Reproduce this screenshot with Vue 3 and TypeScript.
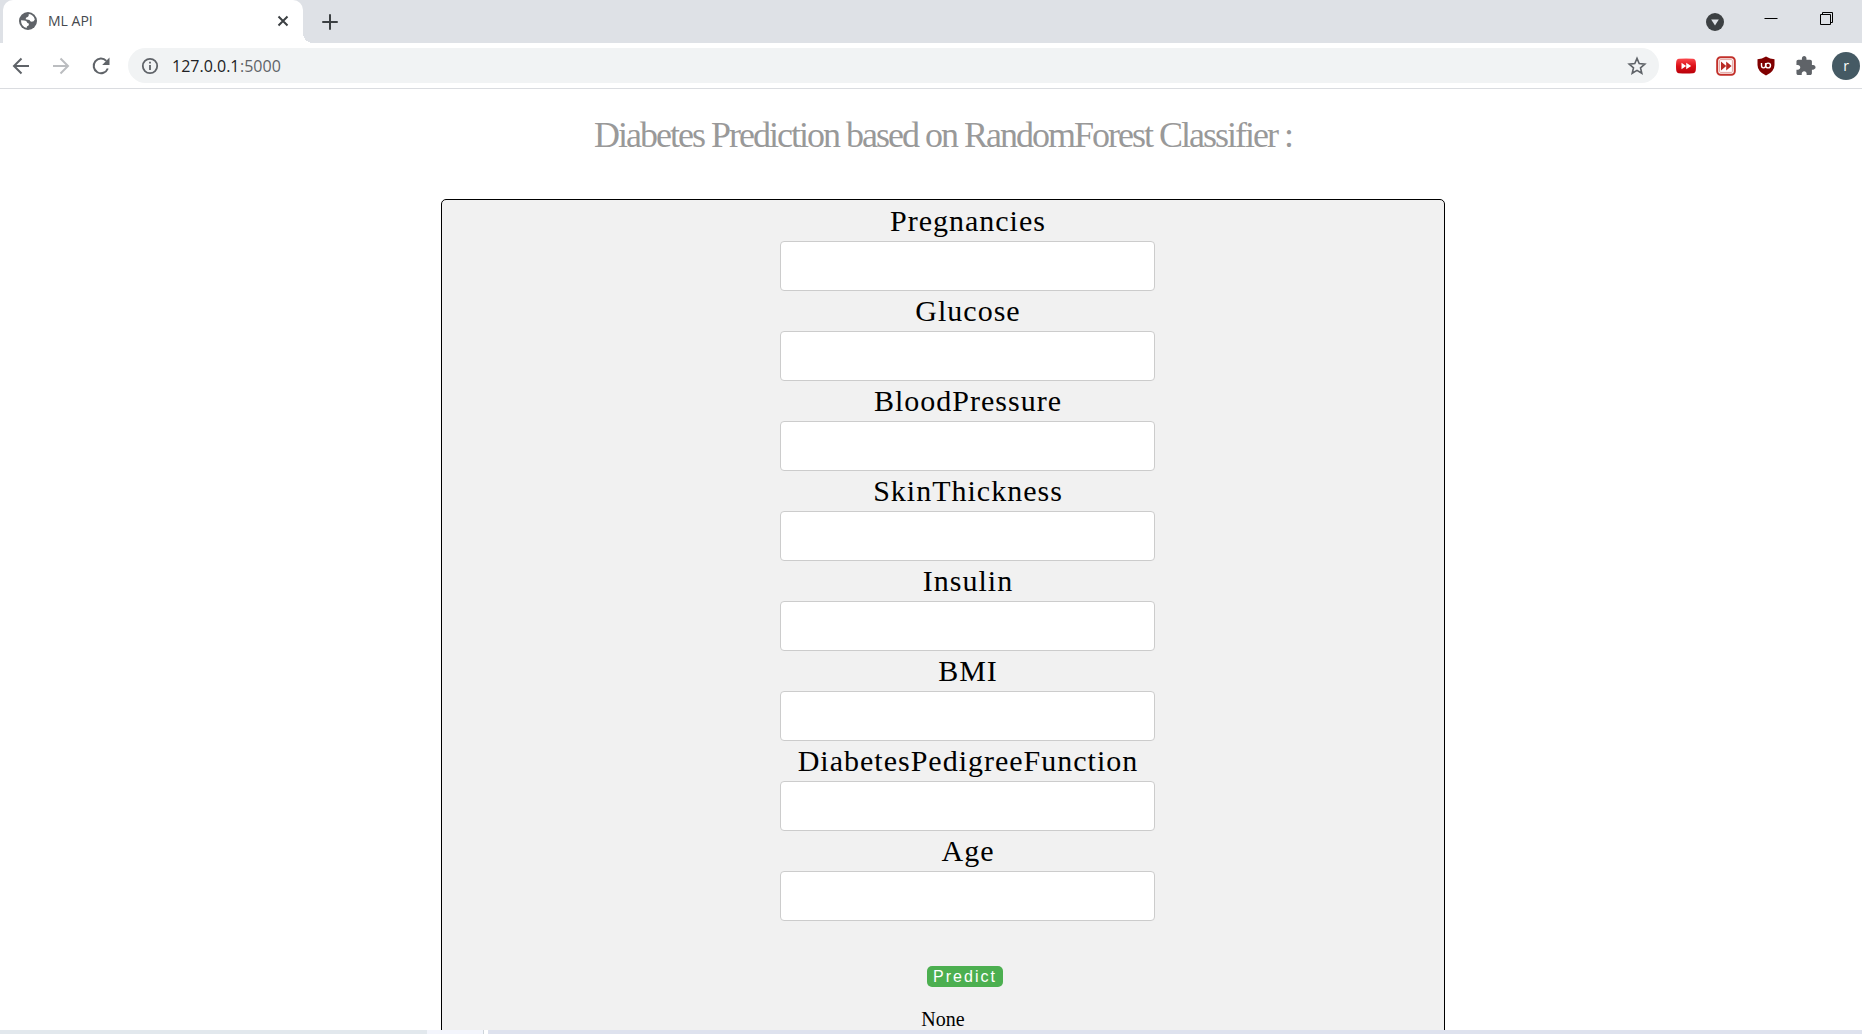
<script setup lang="ts">
import { reactive, ref } from 'vue'

interface Field {
  id: string
  label: string
}

const fields: Field[] = [
  { id: 'pregnancies', label: 'Pregnancies' },
  { id: 'glucose', label: 'Glucose' },
  { id: 'blood-pressure', label: 'BloodPressure' },
  { id: 'skin-thickness', label: 'SkinThickness' },
  { id: 'insulin', label: 'Insulin' },
  { id: 'bmi', label: 'BMI' },
  { id: 'pedigree', label: 'DiabetesPedigreeFunction' },
  { id: 'age', label: 'Age' },
]

const values = reactive<Record<string, string>>({})
const host = ref<string>('127.0.0.1')
const result = ref<string>('None')
</script>

<template>
  <div class="window">
    <header class="tabstrip">
      <div class="tab">
        <svg class="globe" viewBox="0 0 18 18" width="18" height="18">
          <circle cx="9" cy="9" r="9" fill="#5f6368" />
          <path
            d="M2 8.200 L5.200 8.600 Q7.800 8.600 8 10.300 Q8 11.400 9.800 11.500 Q10.400 13.800 8 14.300 L7.600 15.900 Q2 14.800 2 8.200 Z"
            fill="#fff"
          />
          <path
            d="M9.800 2 Q14.600 2.600 15.800 7.400 Q15 9.800 12.600 9.800 L11.300 9.200 Q10.900 7.800 9 7.800 L6.700 7.300 Q6.400 5.300 8.600 4.900 Q10 4.600 9.800 2 Z"
            fill="#fff"
          />
        </svg>
        <span class="tab-title">ML API</span>
        <button class="icon-btn" type="button" aria-label="Close tab">
          <svg viewBox="0 0 12 12" width="12" height="12">
            <path d="M1.500 1.500 L10.500 10.500 M10.500 1.500 L1.500 10.500" stroke="#3c4043" stroke-width="2" />
          </svg>
        </button>
      </div>
      <button class="icon-btn new-tab" type="button" aria-label="New tab">
        <svg viewBox="0 0 16 16" width="16" height="16">
          <path d="M8 1 V15 M1 8 H15" stroke="#3c4043" stroke-width="2" stroke-linecap="round" />
        </svg>
      </button>
      <div class="window-controls">
        <button class="icon-btn" type="button" aria-label="Search tabs">
          <svg viewBox="0 0 18 18" width="18" height="18">
            <circle cx="9" cy="9" r="9" fill="#3c4043" />
            <path d="M5.200 6.500 H12.800 L9 12.400 Z" fill="#dee1e6" />
          </svg>
        </button>
        <button class="icon-btn raised" type="button" aria-label="Minimize">
          <svg viewBox="0 0 14 14" width="14" height="14">
            <path d="M0.500 6.500 H13.500" stroke="#000" />
          </svg>
        </button>
        <button class="icon-btn raised" type="button" aria-label="Restore">
          <svg viewBox="0 0 14 14" width="14" height="14">
            <path d="M0.500 2.500 H10.500 V12.500 H0.500 Z M2.500 2.500 V0.500 H12.500 V10.500 H10.500" fill="none" stroke="#000" />
          </svg>
        </button>
      </div>
    </header>

    <nav class="toolbar">
      <div class="nav-buttons">
        <button class="icon-btn" type="button" aria-label="Back">
          <svg viewBox="0 0 18 18" width="18" height="18" fill="none" stroke="#5f6368" stroke-width="2">
            <path d="M17 9 H2 M9.500 1.500 L2 9 L9.500 16.500" />
          </svg>
        </button>
        <button class="icon-btn" type="button" aria-label="Forward">
          <svg viewBox="0 0 18 18" width="18" height="18" fill="none" stroke="#bbbdc0" stroke-width="2">
            <path d="M1 9 H16 M8.500 1.500 L16 9 L8.500 16.500" />
          </svg>
        </button>
        <button class="icon-btn" type="button" aria-label="Reload">
          <svg viewBox="0 0 18 18" width="18" height="18">
            <path d="M15.800 11.500 A7.300 7.300 0 1 1 14.300 3.900" fill="none" stroke="#5f6368" stroke-width="2" />
            <path d="M17.500 0.600 V8 H10.200 Z" fill="#5f6368" />
          </svg>
        </button>
      </div>

      <label class="omnibox">
        <svg viewBox="0 0 18 18" width="18" height="18">
          <circle cx="9" cy="9" r="7.200" fill="none" stroke="#5f6368" stroke-width="1.800" />
          <path d="M9 8 V13 M9 4.800 V6.600" stroke="#5f6368" stroke-width="1.800" />
        </svg>
        <input v-model="host" class="host" type="text" aria-label="Address" />
        <span class="port">:5000</span>
        <button class="icon-btn star" type="button" aria-label="Bookmark this page">
          <svg viewBox="0 0 20 20" width="20" height="20">
            <path
              d="M10 2.400 L12.200 7.600 L17.800 8.100 L13.500 11.800 L14.800 17.300 L10 14.400 L5.200 17.300 L6.500 11.800 L2.200 8.100 L7.800 7.600 Z"
              fill="none"
              stroke="#5f6368"
              stroke-width="1.600"
            />
          </svg>
        </button>
      </label>

      <div class="extensions">
        <button class="icon-btn" type="button" aria-label="Playback speed">
          <svg viewBox="0 0 20 20" width="20" height="20">
            <defs>
              <linearGradient id="red-fade" x1="0" y1="0" x2="0" y2="1">
                <stop offset="0" stop-color="#fb4a4f" />
                <stop offset="0.500" stop-color="#dd1017" />
                <stop offset="1" stop-color="#b8000a" />
              </linearGradient>
            </defs>
            <path
              d="M3 2.800 Q10 2 17 2.800 Q19.600 3 19.800 6 Q20.200 10 19.800 14 Q19.600 17 17 17.200 Q10 18 3 17.200 Q0.400 17 0.200 14 Q-0.200 10 0.200 6 Q0.400 3 3 2.800 Z"
              fill="url(#red-fade)"
            />
            <path d="M5.500 6.800 L10.200 10 L5.500 13.200 Z M10.200 6.800 L15.200 10 L10.200 13.200 Z" fill="#fff" />
          </svg>
        </button>
        <button class="icon-btn" type="button" aria-label="Fast forward">
          <svg viewBox="0 0 20 20" width="20" height="20">
            <rect x="1.200" y="1.200" width="17.600" height="17.600" rx="3.500" fill="#fff" stroke="#c2302a" stroke-width="2" />
            <rect x="3.600" y="3.600" width="12.800" height="12.800" rx="1" fill="none" stroke="#dc8f8a" stroke-width="0.800" />
            <path d="M5 5.500 L10.200 10 L5 14.500 Z M10.200 5.500 L15.600 10 L10.200 14.500 Z" fill="#b92a24" />
          </svg>
        </button>
        <button class="icon-btn" type="button" aria-label="Content blocker">
          <svg viewBox="0 0 20 20" width="20" height="20">
            <path d="M10 0.500 Q14 3 18.500 3.200 V9 Q18.500 15.500 10 19.600 Q1.500 15.500 1.500 9 V3.200 Q6 3 10 0.500 Z" fill="#800000" />
            <path d="M5.500 7 V9.600 Q5.500 11.900 7.500 11.900 Q9.600 11.900 9.600 9.600 V7" fill="none" stroke="#fff" stroke-width="1.400" />
            <circle cx="12.100" cy="9.500" r="2.400" fill="none" stroke="#fff" stroke-width="1.400" />
          </svg>
        </button>
        <button class="icon-btn" type="button" aria-label="Extensions">
          <svg viewBox="1.500 1 22 22" width="20" height="20">
            <path
              d="M20.500 11H19V7c0-1.100-.900-2-2-2h-4V3.500C13 2.120 11.880 1 10.500 1S8 2.120 8 3.500V5H4c-1.100 0-1.990.900-1.990 2v3.800H3.500c1.490 0 2.700 1.210 2.700 2.700s-1.210 2.700-2.700 2.700H2V20c0 1.100.900 2 2 2h3.800v-1.500c0-1.490 1.210-2.700 2.700-2.700s2.700 1.210 2.700 2.700V22H17c1.100 0 2-.900 2-2v-4h1.500c1.380 0 2.500-1.120 2.500-2.500S21.880 11 20.500 11z"
              fill="#5f6368"
            />
          </svg>
        </button>
        <button class="avatar" type="button" aria-label="Profile">r</button>
      </div>
    </nav>

    <main class="page">
      <h1>Diabetes Prediction based on RandomForest Classifier :</h1>
      <section class="card">
        <form @submit.prevent>
          <div v-for="field in fields" :key="field.id" class="field">
            <label :for="field.id">{{ field.label }}</label>
            <input :id="field.id" v-model="values[field.id]" type="text" />
          </div>
          <button class="predict" type="submit">Predict</button>
        </form>
        <p class="result">{{ result }}</p>
      </section>
    </main>

    <footer class="taskbar">
      <span class="taskbar-start"></span>
      <span class="taskbar-active"></span>
      <span class="taskbar-rest"></span>
    </footer>
  </div>
</template>

<style>
body {
  margin: 0;
}
</style>

<style scoped>
.window {
  display: flex;
  flex-direction: column;
  height: 100vh;
  overflow: hidden;
  background: #fff;
  font-family: 'Open Sans', 'Noto Sans', sans-serif;
}

svg {
  display: block;
  flex: none;
}

.icon-btn {
  display: flex;
  padding: 0;
  border: 0;
  background: none;
}

.tabstrip {
  display: flex;
  flex: none;
  height: 43px;
  padding-left: 3px;
  background: #dee1e6;
}

.tab {
  position: relative;
  display: flex;
  align-items: center;
  box-sizing: border-box;
  width: 300px;
  padding: 0 14px 2px 16px;
  border-radius: 10px 10px 0 0;
  background: #fff;
}

/* Flared foot that joins the tab to the toolbar */
.tab::after {
  content: '';
  position: absolute;
  bottom: 0;
  left: 100%;
  width: 10px;
  height: 10px;
  background: radial-gradient(circle at 100% 0, transparent 10px, #fff 10px);
}

.tab-title {
  flex: 1;
  padding-left: 11px;
  color: #45494e;
  font-size: 14px;
  line-height: 20px;
}

.new-tab {
  align-items: center;
  padding-left: 19px;
}

.window-controls {
  display: flex;
  align-items: center;
  margin-left: auto;
  padding-right: 28px;
}

.window-controls .raised {
  padding-bottom: 6px;
}

.window-controls .raised:nth-child(2) {
  margin: 0 42px 0 40px;
}

.toolbar {
  display: flex;
  align-items: center;
  flex: none;
  height: 45px;
  padding: 0 2px 0 12px;
  border-bottom: 1px solid #dadce0;
}

.nav-buttons {
  display: flex;
  gap: 22px;
  padding-right: 18px;
}

.omnibox {
  display: flex;
  align-items: center;
  flex: 1;
  height: 35px;
  padding: 0 12px 0 13px;
  border-radius: 18px;
  background: #f1f3f4;
  font-size: 16px;
  line-height: 22px;
}

.host {
  width: 68px;
  margin-left: 13px;
  padding: 0;
  border: 0;
  outline: 0;
  background: none;
  color: #202124;
  font: inherit;
}

.port {
  color: #5f6368;
}

.star {
  margin-left: auto;
}

.extensions {
  display: flex;
  align-items: center;
  gap: 20px;
  padding-left: 17px;
}

.avatar {
  width: 28px;
  height: 28px;
  margin-left: -4px;
  padding: 0;
  border: 0;
  border-radius: 50%;
  background: #455a64;
  color: #fff;
  font: 14px/24px 'Open Sans', sans-serif;
}

.page {
  flex: 1;
  min-height: 0;
  padding: 24px 0 0 24px;
  overflow: hidden;
  font-family: 'Liberation Serif', serif;
}

h1 {
  margin: 0 0 42px;
  color: #999;
  font-size: 36px;
  font-weight: 400;
  line-height: 44px;
  letter-spacing: -2px;
  text-align: center;
}

.card {
  box-sizing: border-box;
  width: 54.6%;
  min-height: 900px;
  margin: 0 auto;
  padding-top: 1px;
  border: 1px solid #000;
  border-radius: 5px;
  background: #f1f1f1;
}

form {
  display: flex;
  flex-direction: column;
  align-items: center;
  padding-left: 50px;
}

.field {
  display: flex;
  flex-direction: column;
  width: 375px;
}

.field label {
  font-size: 30px;
  line-height: 40px;
  letter-spacing: 1px;
  text-align: center;
}

.field input {
  box-sizing: border-box;
  width: 100%;
  height: 50px;
  padding: 12px 20px;
  border: 1px solid #ccc;
  border-radius: 4px;
  background: #fff;
}

.predict {
  margin: 45px 6px 0 0;
  padding: 0 6px;
  border: 0;
  border-radius: 5px;
  background: #4caf50;
  color: #fff;
  font: 16px/21px 'Liberation Sans', sans-serif;
  letter-spacing: 2px;
}

.result {
  margin: 20px 0 0;
  font-size: 20px;
  line-height: 24px;
  text-align: center;
}

.taskbar {
  display: flex;
  flex: none;
  height: 4px;
}

.taskbar-start {
  width: 427px;
  background: #e2e8ed;
}

.taskbar-active {
  width: 56px;
  margin-right: 4px;
  border-right: 1px solid #ced5da;
  background: #f3f5fc;
}

.taskbar-rest {
  flex: 1;
  background: #dee2ee;
}
</style>
